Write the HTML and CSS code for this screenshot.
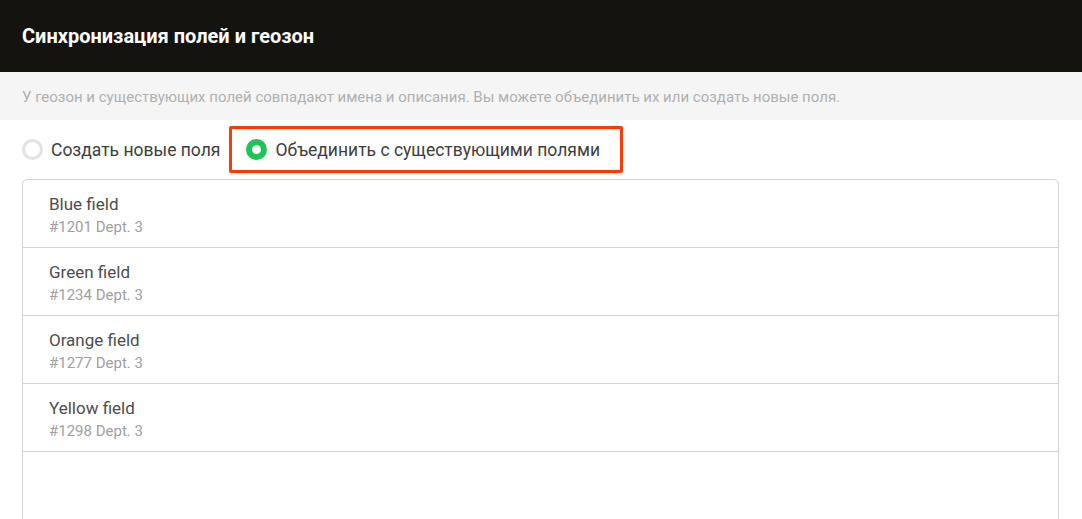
FILE: index.html
```html
<!DOCTYPE html>
<html lang="ru">
<head>
<meta charset="utf-8">
<title>Синхронизация полей и геозон</title>
<link rel="stylesheet" href="styles.css">
</head>
<body>
<header class="header">
  <h1 class="title">Синхронизация полей и геозон</h1>
</header>
<div class="notice">У геозон и существующих полей совпадают имена и описания. Вы можете объединить их или создать новые поля.</div>
<main class="content">
  <div class="options">
    <label class="option">
      <span class="radio"></span>
      <span class="option-text">Создать новые поля</span>
    </label>
    <label class="option option-highlight">
      <span class="radio radio-checked"></span>
      <span class="option-text">Объединить с существующими полями</span>
    </label>
  </div>
  <ul class="list">
    <li class="item">
      <div class="item-title">Blue field</div>
      <div class="item-sub">#1201 Dept. 3</div>
    </li>
    <li class="item">
      <div class="item-title">Green field</div>
      <div class="item-sub">#1234 Dept. 3</div>
    </li>
    <li class="item">
      <div class="item-title">Orange field</div>
      <div class="item-sub">#1277 Dept. 3</div>
    </li>
    <li class="item">
      <div class="item-title">Yellow field</div>
      <div class="item-sub">#1298 Dept. 3</div>
    </li>
  </ul>
</main>
</body>
</html>
```

FILE: styles.css
```css
* { box-sizing: border-box; }
html, body {
  margin: 0;
  padding: 0;
  background: #ffffff;
  font-family: Roboto, "Noto Sans", "Liberation Sans", sans-serif;
  overflow: hidden;
}
.header {
  height: 72px;
  background: #141310;
  display: flex;
  align-items: center;
  padding: 0 22px;
}
.title {
  margin: 0;
  color: #ffffff;
  font-size: 20px;
  font-weight: 700;
}
.notice {
  height: 48px;
  background: #f5f5f5;
  display: flex;
  align-items: center;
  padding: 2px 22px 0;
  color: #b0b0b0;
  font-size: 15px;
}
.content {
  padding: 6px 22px 0 22px;
}
.options {
  display: flex;
  align-items: center;
  gap: 9px;
  height: 47px;
}
.option {
  display: flex;
  align-items: center;
  gap: 8px;
  font-size: 17.5px;
  color: #3d3d3d;
  cursor: pointer;
}
.option-highlight {
  border: 3px solid #ff3a00;
  border-radius: 2px;
  height: 47px;
  padding: 0 20px 0 14px;
}
.radio {
  width: 21px;
  height: 21px;
  border-radius: 50%;
  border: 3px solid #e3e3e3;
  background: #fff;
  flex: none;
}
.radio-checked {
  border: 6px solid #1ec457;
  background: #ffffff;
}
.list {
  list-style: none;
  margin: 6px 1px 0 0;
  padding: 0;
  border: 1px solid #d4d4d4;
  border-radius: 5px;
  height: 400px;
}
.item {
  padding: 14px 26px 11px;
  border-bottom: 1px solid #d4d4d4;
}
.item-title {
  font-size: 17px;
  line-height: 20px;
  color: #4d4d4d;
}
.item-sub {
  margin-top: 4px;
  font-size: 15px;
  line-height: 18px;
  color: #a0a0a0;
}
```
